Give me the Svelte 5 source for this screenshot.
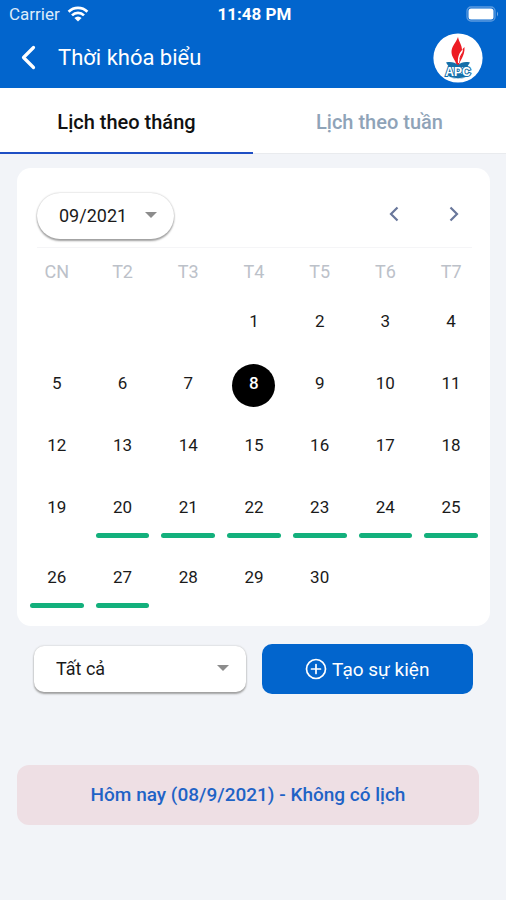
<script>
  const weekdays = ['CN', 'T2', 'T3', 'T4', 'T5', 'T6', 'T7'];
  const firstWeekday = 3;
  const daysInMonth = 30;
  const eventDays = [20, 21, 22, 23, 24, 25, 26, 27];

  const weeks = [];
  for (let start = 1 - firstWeekday; start <= daysInMonth; start += 7) {
    weeks.push(
      Array.from({ length: 7 }, (_, i) => {
        const day = start + i;
        return day >= 1 && day <= daysInMonth ? day : null;
      })
    );
  }

  let tab = $state('month');
  let selected = $state(8);
  let month = $state('09/2021');
  let filter = $state('all');
</script>

<div class="screen">
  <header>
    <div class="status">
      <div class="carrier">
        <span>Carrier</span>
        <svg width="22" height="16" viewBox="0 0 22 16" aria-hidden="true">
          <g fill="none" stroke="#fff" stroke-width="2.7">
            <path d="M1.6 5.7a13.4 13.4 0 0 1 18.8 0" />
            <path d="M5 9.4a8.5 8.5 0 0 1 12 0" />
          </g>
          <path d="M11 15.6 7.4 12a5 5 0 0 1 7.2 0z" fill="#fff" />
        </svg>
      </div>
      <span class="time">11:48 PM</span>
      <svg class="battery" width="34" height="16" viewBox="0 0 34 16" aria-hidden="true">
        <rect x="1" y="1" width="28" height="14" rx="4" fill="none" stroke="#5c9bdf" stroke-width="1.3" />
        <rect x="2.500" y="2.500" width="25" height="11" rx="2.500" fill="#fff" />
        <path d="M31 5.500q2 2.500 0 5z" fill="#79aee4" />
      </svg>
    </div>
    <div class="titlebar">
      <button class="back" aria-label="Quay lại">
        <svg width="18" height="26" viewBox="0 0 18 26" aria-hidden="true">
          <path d="M14.500 2.500 4.500 12.500l10 10" fill="none" stroke="#fff" stroke-width="3.2" stroke-linecap="round" stroke-linejoin="round" />
        </svg>
      </button>
      <h1>Thời khóa biểu</h1>
      <svg class="logo" width="50" height="50" viewBox="0 0 50 50" role="img" aria-label="APC">
        <circle cx="25" cy="25" r="24.600" fill="#fff" />
        <path d="M25 4C23 10 18.500 13 18.500 19c0 5 4 8 5 13h2.500c1-5 6-9 5.500-18-1 1-2 2-2.500 3C29 12 26 9 25 4z" fill="#ed1c24" />
        <path d="M25 30c-.5-6 1-10 5-14-.5 6-3 7-4 14z" fill="#fff" />
        <path d="M26.300 27c0-3 1.500-6 3.500-8-.2 3-2 5-3.500 8z" fill="#ed1c24" />
        <path d="M13 29.500c5-1.200 9 0 12 2.500 3-2.500 7-3.700 12-2.500l-3 4.500H16z" fill="#156fa9" />
        <path d="M14 41h22c-2 3-6 5-11 5s-9-2-11-5z" fill="#156fa9" />
        <path d="M16 44.500q9 2.500 18 0" fill="none" stroke="#fff" stroke-width=".8" />
        <text x="25" y="43" text-anchor="middle" class="logo-text">APC</text>
      </svg>
    </div>
  </header>

  <div class="tabs" role="tablist">
    <button role="tab" aria-selected={tab === 'month'} class:active={tab === 'month'} onclick={() => (tab = 'month')}>Lịch theo tháng</button>
    <button role="tab" aria-selected={tab === 'week'} class:active={tab === 'week'} onclick={() => (tab = 'week')}>Lịch theo tuần</button>
  </div>

  <main>
    <section class="card">
      <div class="toolbar">
        <div class="picker month">
          <select aria-label="Tháng" bind:value={month}>
            <option value="09/2021">09/2021</option>
          </select>
          <svg width="12" height="6" viewBox="0 0 12 6" aria-hidden="true"><path d="M0 0h12L6 6z" fill="#8c8c8c" /></svg>
        </div>
        <div class="steps">
          <button aria-label="Tháng trước">
            <svg width="10" height="16" viewBox="0 0 10 16" aria-hidden="true"><path d="M8.500 1.500 2 8l6.500 6.500" /></svg>
          </button>
          <button aria-label="Tháng sau">
            <svg width="10" height="16" viewBox="0 0 10 16" aria-hidden="true"><path d="M1.500 1.500 8 8l-6.500 6.500" /></svg>
          </button>
        </div>
      </div>

      <table>
        <thead>
          <tr>
            {#each weekdays as name}
              <th scope="col">{name}</th>
            {/each}
          </tr>
        </thead>
        <tbody>
          {#each weeks as week}
            <tr>
              {#each week as day}
                <td>
                  {#if day}
                    <button class="day" class:selected={day === selected} onclick={() => (selected = day)}>{day}</button>
                    {#if eventDays.includes(day)}
                      <div class="event"></div>
                    {/if}
                  {/if}
                </td>
              {/each}
            </tr>
          {/each}
        </tbody>
      </table>
    </section>

    <div class="actions">
      <div class="picker filter">
        <select aria-label="Loại lịch" bind:value={filter}>
          <option value="all">Tất cả</option>
        </select>
        <svg width="12" height="6" viewBox="0 0 12 6" aria-hidden="true"><path d="M0 0h12L6 6z" fill="#8c8c8c" /></svg>
      </div>
      <button class="create">
        <svg width="22" height="22" viewBox="0 0 22 22" aria-hidden="true">
          <g fill="none" stroke="#fff" stroke-width="1.700" stroke-linecap="round">
            <circle cx="11" cy="11" r="9.500" />
            <path d="M11 6.500v9M6.500 11h9" />
          </g>
        </svg>
        <span>Tạo sự kiện</span>
      </button>
    </div>

    <p class="notice">Hôm nay (08/9/2021) - Không có lịch</p>
  </main>
</div>

<style>
  :global(body) {
    margin: 0;
    background: #f2f4f8;
  }

  .screen {
    min-height: 100vh;
    background: #f2f4f8;
    color: #1a1a1a;
    font-family: Roboto, 'Noto Sans', sans-serif;
  }

  button,
  select {
    margin: 0;
    padding: 0;
    border: 0;
    background: none;
    color: inherit;
    font: inherit;
    cursor: pointer;
  }

  svg {
    display: block;
    flex: none;
  }

  header {
    background: #0265cd;
    color: #fff;
  }

  .status {
    display: grid;
    grid-template-columns: 1fr auto 1fr;
    align-items: center;
    height: 28px;
    padding: 0 6px 0 9px;
    font-size: 17px;
    line-height: 20px;
  }

  .carrier {
    display: flex;
    align-items: center;
    gap: 7px;
    color: #dcebfa;
  }

  .time {
    font-weight: 700;
  }

  .battery {
    justify-self: end;
  }

  .titlebar {
    display: flex;
    align-items: center;
    height: 60px;
    padding: 0 23px 0 19px;
  }

  .back {
    width: 39px;
  }

  h1 {
    flex: 1;
    margin: 0;
    font-size: 22px;
    font-weight: 400;
    line-height: 28px;
  }

  .logo-text {
    font: 700 12px 'Liberation Sans', sans-serif;
    fill: #fff;
    stroke: #156fa9;
    stroke-width: 2px;
    paint-order: stroke;
  }

  .tabs {
    display: flex;
    background: #fff;
  }

  .tabs button {
    flex: 1;
    height: 66px;
    padding-top: 2px;
    border-bottom: 1px solid #e9ebee;
    color: #8fa3b8;
    font-size: 20px;
    font-weight: 500;
  }

  .tabs .active {
    padding-top: 3px;
    border-bottom: 2px solid #1f4fc4;
    color: #111;
  }

  main {
    padding: 14px 16px 14px 17px;
  }

  .card {
    padding: 0 6px 10px 7px;
    border-radius: 14px;
    background: #fff;
  }

  .toolbar {
    display: flex;
    align-items: center;
    justify-content: space-between;
    height: 54px;
    margin: 0 12px 6px 13px;
    padding-top: 25px;
    border-bottom: 1px solid #f5f5f7;
  }

  .picker {
    position: relative;
  }

  .picker select {
    display: block;
    width: 100%;
    height: 46px;
    padding: 0 22px 2px;
    appearance: none;
    border-radius: 10px;
    background: #fff;
    box-shadow: 0 2px 2px #a0a0a0, 0 0 2px #bbb;
    font-size: 18px;
  }

  .picker svg {
    position: absolute;
    top: 50%;
    right: 17px;
    margin-top: -4px;
    pointer-events: none;
  }

  .month {
    width: 137px;
    height: 54px;
  }

  .month select {
    border-radius: 23px;
  }

  .month svg {
    top: 23px;
  }

  .steps {
    display: flex;
    height: 54px;
    gap: 30px;
    padding-right: 3px;
  }

  .steps button {
    display: flex;
    justify-content: center;
    width: 30px;
    height: 42px;
    align-items: center;
  }

  .steps path {
    fill: none;
    stroke: #69779b;
    stroke-width: 2.2;
  }

  table {
    width: 100%;
    table-layout: fixed;
    border-collapse: collapse;
  }

  th {
    height: 36px;
    padding: 0;
    color: #bcc1c9;
    font-size: 18px;
    font-weight: 400;
    line-height: 20px;
  }

  td {
    height: 62px;
    padding: 0;
    vertical-align: top;
  }

  .day {
    display: block;
    width: 43px;
    height: 43px;
    margin: 12px auto 0;
    padding-bottom: 5px;
    border-radius: 50%;
    font-size: 17px;
    line-height: 20px;
  }

  .selected {
    background: #000;
    color: #fff;
    font-weight: 500;
  }

  .event {
    height: 5px;
    margin: 2px 6px 8px;
    border-radius: 3px;
    background: #13b07c;
  }

  .actions {
    display: flex;
    align-items: center;
    gap: 16px;
    margin: 18px 17px 0;
  }

  .actions > * {
    flex: 1;
  }

  .create {
    display: flex;
    align-items: center;
    justify-content: center;
    gap: 5px;
    height: 50px;
    border-radius: 10px;
    background: #0265cd;
    color: #fff;
    font-size: 19px;
  }

  .notice {
    margin: 71px 11px 0 0;
    padding: 18px 0;
    border-radius: 12px;
    background: #eedfe4;
    color: #1f63c6;
    font-size: 19px;
    font-weight: 500;
    line-height: 24px;
    text-align: center;
  }
</style>
